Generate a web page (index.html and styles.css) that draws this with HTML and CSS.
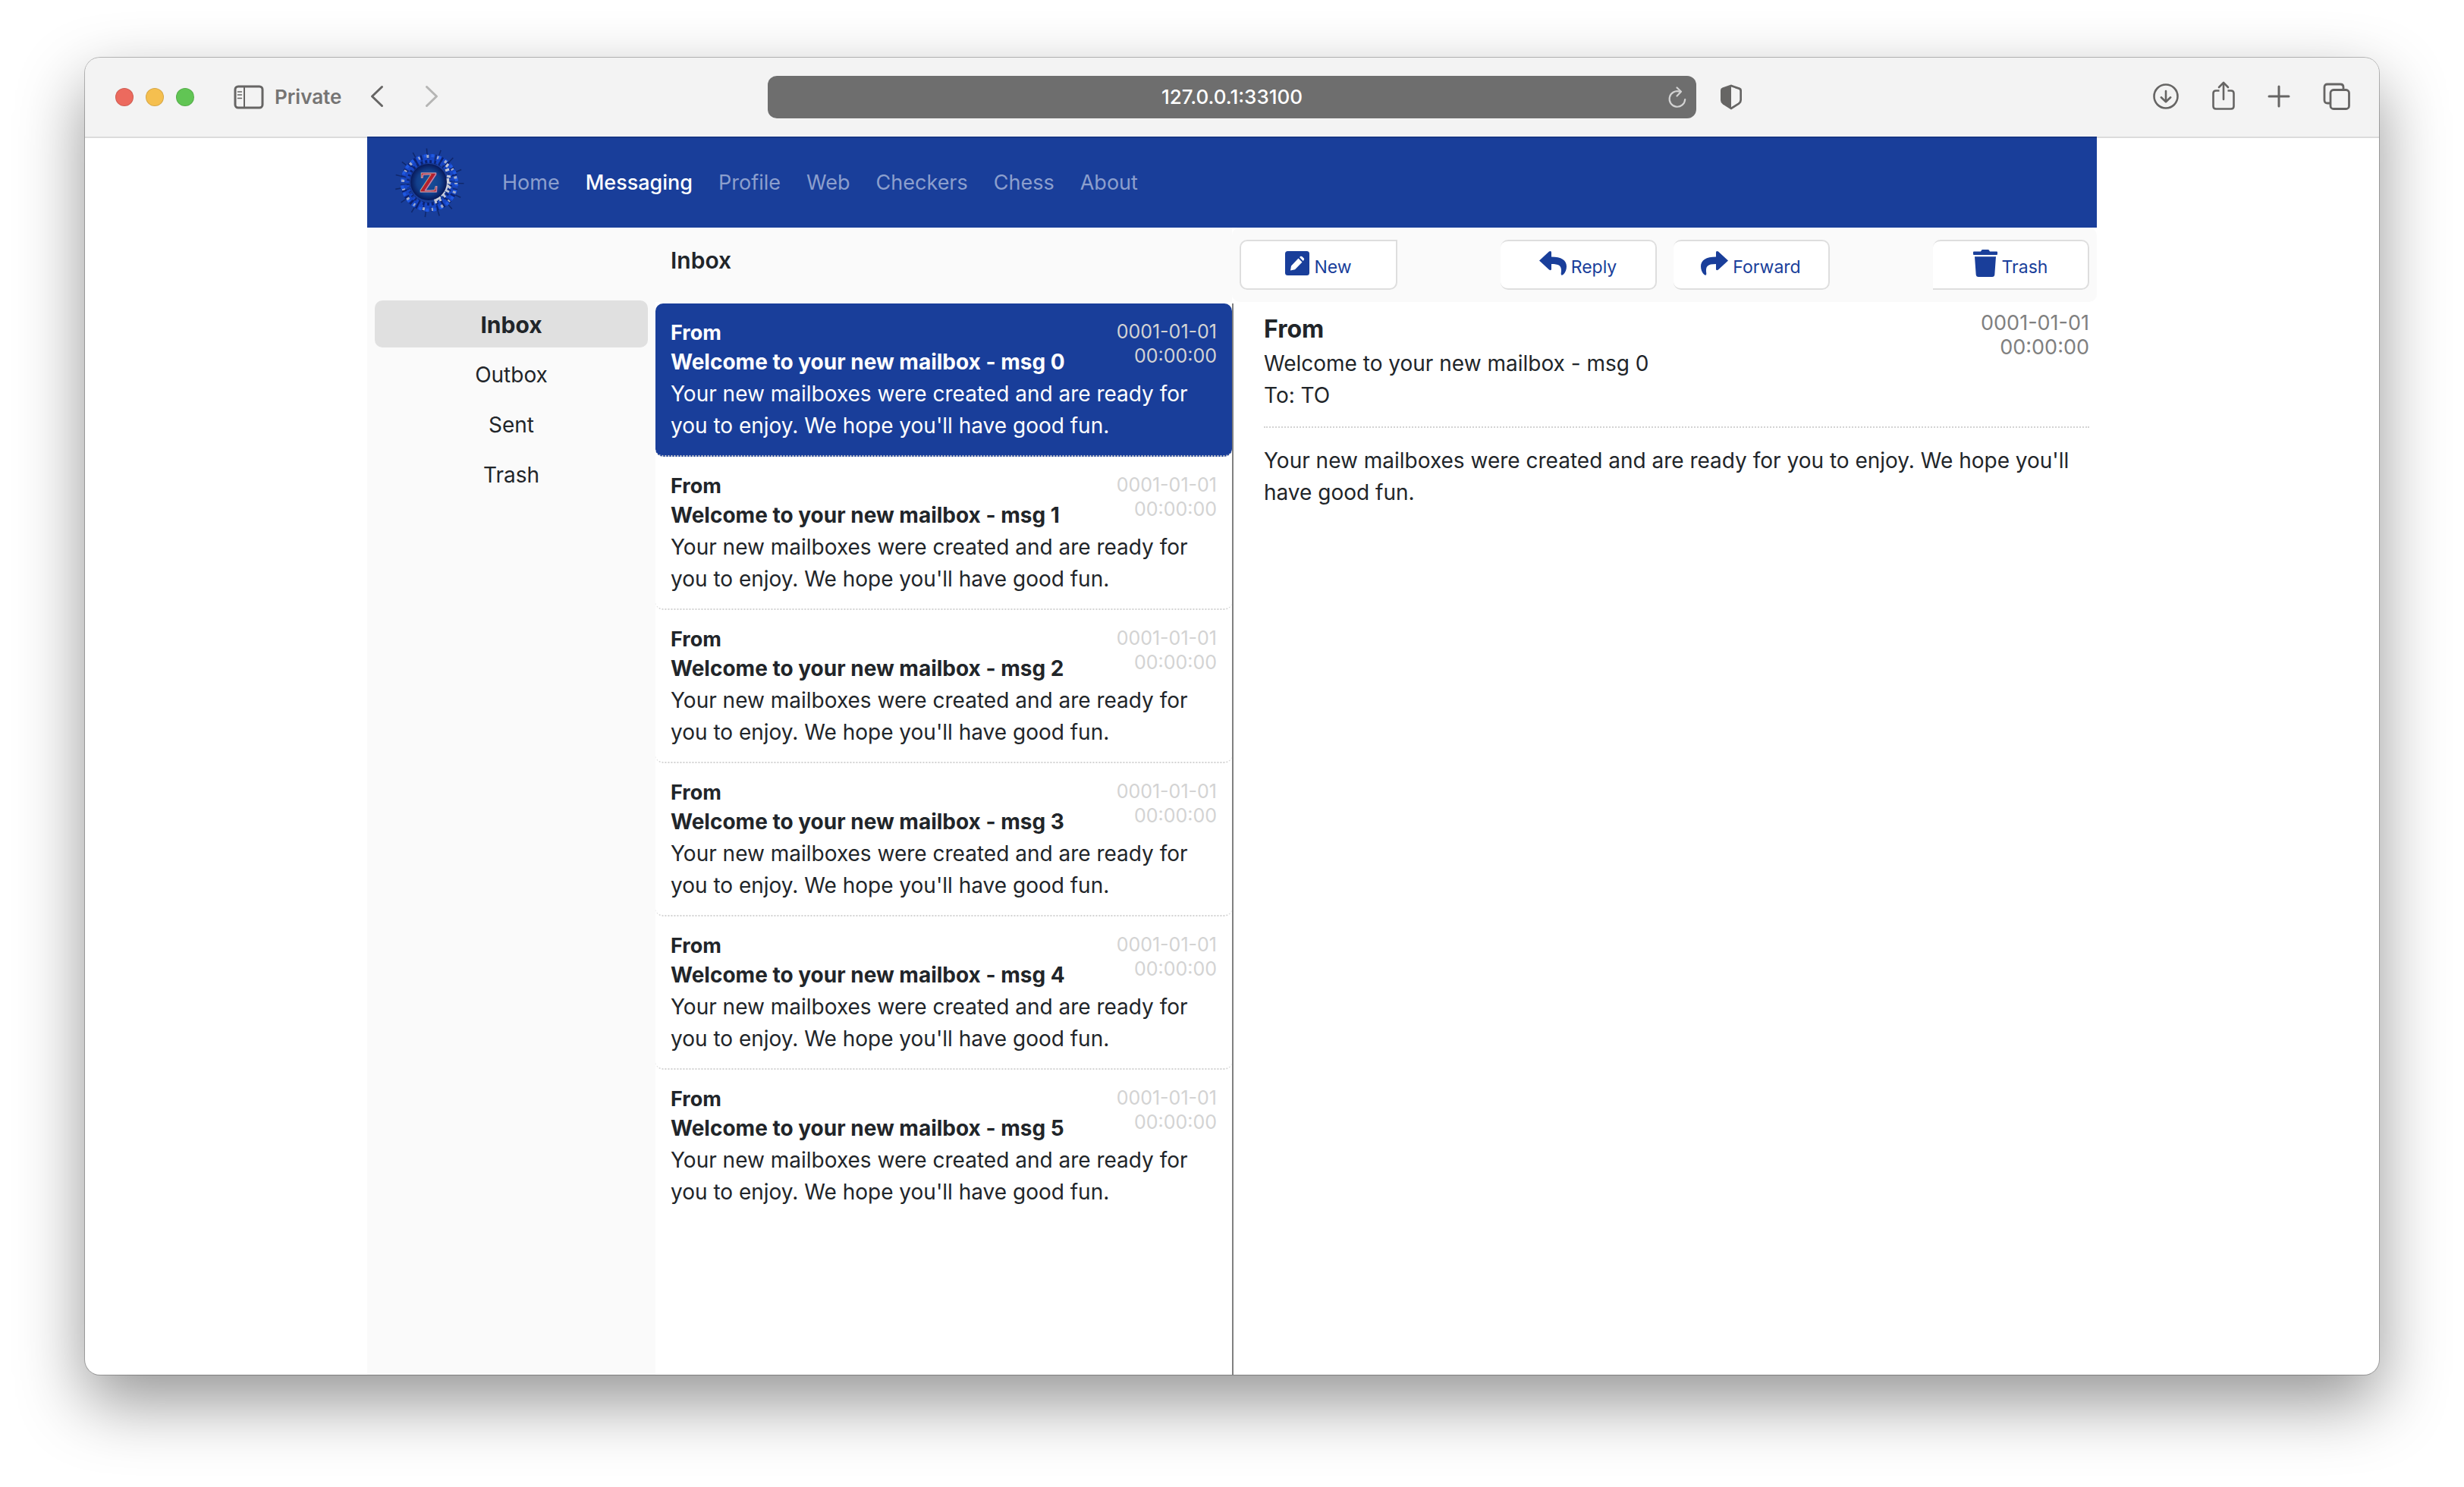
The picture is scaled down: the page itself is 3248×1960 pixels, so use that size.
FILE: index.html
```html
<!DOCTYPE html>
<html lang="en">
<head>
<meta charset="utf-8">
<meta name="viewport" content="width=device-width, initial-scale=1">
<title>Messaging</title>
<link rel="stylesheet" href="styles.css">
</head>
<body>
<div class="window">
  <header class="chrome">
    <div class="chrome-left">
      <div class="lights"><span class="light red"></span><span class="light yellow"></span><span class="light green"></span></div>
      <button class="icon-btn sidebar-btn" aria-label="Show sidebar">
        <svg width="40" height="32" viewBox="0 0 40 32" fill="none" stroke="currentColor" stroke-width="3"><rect x="2" y="2" width="36" height="28" rx="4"/><path d="M14 2v28" stroke-width="2"/><path d="M5.500 9h5M5.500 13h5M5.500 17.500h5" stroke-width="1.500" stroke-linecap="round"/></svg>
      </button>
      <span class="private">Private</span>
      <button class="icon-btn back-btn" aria-label="Back">
        <svg width="18" height="30" viewBox="0 0 18 30" fill="none" stroke="currentColor" stroke-width="3" stroke-linecap="round" stroke-linejoin="round"><path d="M15.500 1.500L2.500 14l13 12.500"/></svg>
      </button>
      <button class="icon-btn forward-btn" aria-label="Forward">
        <svg width="18" height="30" viewBox="0 0 18 30" fill="none" stroke="currentColor" stroke-width="3" stroke-linecap="round" stroke-linejoin="round"><path d="M2.500 1.500l13 12.500l-13 12.500"/></svg>
      </button>
    </div>
    <div class="address">
      <input class="address-input" type="text" value="127.0.0.1:33100" aria-label="Address">
      <button class="icon-btn reload-btn" aria-label="Reload">
        <svg width="26" height="30" viewBox="0 0 26 30" fill="none" stroke="currentColor" stroke-width="2.200" stroke-linecap="round"><path d="M23.200 18A10.300 10.300 0 1 1 16 7.600"/><path d="M12.500 2.500l5.500 5.300l-5.500 5.700" stroke-linejoin="round"/></svg>
      </button>
    </div>
    <div class="chrome-right">
      <button class="icon-btn" aria-label="Privacy report">
        <svg width="28" height="34" viewBox="0 0 28 34"><path d="M14 0.500L25.500 4.600Q28 5.600 28 8V21Q28 24.500 25 26.600L14 33.500L3 26.600Q0 24.500 0 21V8Q0 5.600 2.500 4.600Z" fill="currentColor"/><path d="M14 3.500L24 7Q25.300 7.500 25.300 9V20.500Q25.300 23 23.200 24.400L14 30.300Z" fill="#f3f3f3"/></svg>
      </button>
      <div class="chrome-actions">
        <button class="icon-btn" aria-label="Downloads">
          <svg width="34" height="36" viewBox="0 0 34 36" fill="none" stroke="currentColor" stroke-width="2.600" stroke-linecap="round" stroke-linejoin="round"><circle cx="17" cy="17" r="15.500"/><path d="M17 10v14M10.800 18.300L17 24.200l6.200-5.900"/></svg>
        </button>
        <button class="icon-btn" aria-label="Share">
          <svg width="30" height="42" viewBox="0 0 30 42" fill="none" stroke="currentColor" stroke-width="2.600" stroke-linecap="round" stroke-linejoin="round"><path d="M9.500 12.500H5q-3.500 0-3.500 3.500v17q0 3.500 3.500 3.500h20q3.500 0 3.500-3.500V16q0-3.500-3.500-3.500h-4.500" stroke-linecap="butt"/><path d="M15 24V2M9 8l6-6.200L21 8"/></svg>
        </button>
        <button class="icon-btn" aria-label="New tab">
          <svg width="28" height="30" viewBox="0 0 28 30" fill="none" stroke="currentColor" stroke-width="3" stroke-linecap="round"><path d="M14 1v26M1 14h26"/></svg>
        </button>
        <button class="icon-btn" aria-label="Tab overview">
          <svg width="36" height="38" viewBox="0 0 36 38" fill="none" stroke="currentColor" stroke-width="2.800"><path d="M9 27H6q-4 0-4-4V6q0-4 4-4h17q4 0 4 4v3.500"/><rect x="10" y="9.500" width="24.500" height="25" rx="4"/></svg>
        </button>
      </div>
    </div>
  </header>

  <div class="app">
    <nav class="navbar">
      <a class="logo" href="#" aria-label="Z home">
        <svg width="96" height="96" viewBox="0 0 96 96">
          <defs><radialGradient id="core"><stop offset="0" stop-color="#17529a"/><stop offset=".65" stop-color="#123f8c"/><stop offset="1" stop-color="#08195a"/></radialGradient></defs>
          <g fill="none">
            <circle cx="48" cy="48" r="41" stroke="#10286c" stroke-width="9" stroke-dasharray="1.500 15.670"/>
            <circle cx="48" cy="48" r="32" stroke="#0b2272" stroke-width="12" stroke-dasharray="5 2.180"/>
            <circle cx="48" cy="48" r="34" stroke="#1746c4" stroke-width="8" stroke-dasharray="6 2.900"/>
            <circle cx="48" cy="48" r="36" stroke="#1f58e0" stroke-width="4" stroke-dasharray="4 5.550"/>
            <circle cx="48" cy="48" r="29" stroke="#1746c4" stroke-width="5" stroke-dasharray="3 3.070"/>
            <circle cx="48" cy="48" r="35" stroke="#a3adcb" stroke-width="4" stroke-dasharray="2 9 3 11"/>
            <path d="M69 32l5-2M71 39l5 1M69 45l7 4M70 50l6 5M66 56l8 4M64 60l5 7M60 65l3 7M55 68l2 7M70 27l3-4" stroke="#c0c5d6" stroke-width="3"/>
            <path d="M72 42Q74 57 56 71" stroke="#cdd1de" stroke-width="4" stroke-dasharray="7 2"/>
          </g>
          <circle cx="47" cy="47" r="24" fill="url(#core)"/>
          <text class="logo-z" x="47" y="60" text-anchor="middle">Z</text>
        </svg>
      </a>
      <div class="nav-links">
        <a href="#">Home</a>
        <a href="#" class="current" aria-current="page">Messaging</a>
        <a href="#">Profile</a>
        <a href="#">Web</a>
        <a href="#">Checkers</a>
        <a href="#">Chess</a>
        <a href="#">About</a>
      </div>
    </nav>

    <main class="mail">
      <nav class="folders" aria-label="Mailboxes">
        <a class="folder active" href="#">Inbox</a>
        <a class="folder" href="#">Outbox</a>
        <a class="folder" href="#">Sent</a>
        <a class="folder" href="#">Trash</a>
      </nav>

      <section class="listing">
        <h1 class="listing-title">Inbox</h1>
        <ul class="messages">
          <li><a class="message selected" href="#"><span class="from">From</span><time class="date">0001-01-01<br>00:00:00</time><span class="subject">Welcome to your new mailbox - msg 0</span><span class="preview">Your new mailboxes were created and are ready for you to enjoy. We hope you'll have good fun.</span></a></li>
          <li><a class="message" href="#"><span class="from">From</span><time class="date">0001-01-01<br>00:00:00</time><span class="subject">Welcome to your new mailbox - msg 1</span><span class="preview">Your new mailboxes were created and are ready for you to enjoy. We hope you'll have good fun.</span></a></li>
          <li><a class="message" href="#"><span class="from">From</span><time class="date">0001-01-01<br>00:00:00</time><span class="subject">Welcome to your new mailbox - msg 2</span><span class="preview">Your new mailboxes were created and are ready for you to enjoy. We hope you'll have good fun.</span></a></li>
          <li><a class="message" href="#"><span class="from">From</span><time class="date">0001-01-01<br>00:00:00</time><span class="subject">Welcome to your new mailbox - msg 3</span><span class="preview">Your new mailboxes were created and are ready for you to enjoy. We hope you'll have good fun.</span></a></li>
          <li><a class="message" href="#"><span class="from">From</span><time class="date">0001-01-01<br>00:00:00</time><span class="subject">Welcome to your new mailbox - msg 4</span><span class="preview">Your new mailboxes were created and are ready for you to enjoy. We hope you'll have good fun.</span></a></li>
          <li><a class="message" href="#"><span class="from">From</span><time class="date">0001-01-01<br>00:00:00</time><span class="subject">Welcome to your new mailbox - msg 5</span><span class="preview">Your new mailboxes were created and are ready for you to enjoy. We hope you'll have good fun.</span></a></li>
        </ul>
      </section>

      <section class="reader">
        <div class="actions">
          <button class="action first">
            <svg width="32" height="32" viewBox="0 0 32 32"><rect width="32" height="32" rx="3.500" fill="currentColor"/><path d="M7 25.500L8 19.500L17.500 9.500L22.500 14.500L13 24.300ZM19 8L20.500 6.800Q21.500 6.300 22.500 7.300L24.800 9.600Q25.600 10.700 24.700 11.700L23.700 13Z" fill="#fff"/></svg>
            <span>New</span>
          </button>
          <div class="action-group">
            <button class="action joined">
              <svg width="36" height="32" viewBox="0 0 36 32"><path d="M0 12.500L13 .6Q16 -1 16 2V7.500C29 7.500 36 12 36 20Q36 27 31.500 31Q28.500 33 28.700 29.500C30 20 27.500 17 16 17V23.500Q16 26.500 13 24.500Z" fill="currentColor"/></svg>
              <span>Reply</span>
            </button>
            <button class="action joined">
              <svg width="36" height="32" viewBox="0 0 36 32"><path d="M36 12.500L23 .6Q20 -1 20 2V7.500C7 7.500 0 12 0 20Q0 27 4.500 31Q7.500 33 7.300 29.500C6 20 8.500 17 20 17V23.500Q20 26.500 23 24.500Z" fill="currentColor"/></svg>
              <span>Forward</span>
            </button>
          </div>
          <button class="action joined last">
            <svg width="32" height="36" viewBox="0 0 32 36"><path d="M1 2.500H10L11.200 .6Q11.600 0 12.500 0H19.500Q20.400 0 20.800 .6L22 2.500H31Q32 2.500 32 3.500V6Q32 7 31 7H1Q0 7 0 6V3.500Q0 2.500 1 2.500ZM2 9.200H30L28.300 33Q28 36 25 36H7Q4 36 3.700 33Z" fill="currentColor"/></svg>
            <span>Trash</span>
          </button>
        </div>
        <article class="letter">
          <header class="letter-head">
            <h2 class="letter-from">From</h2>
            <time class="letter-date">0001-01-01<br>00:00:00</time>
            <p class="letter-line">Welcome to your new mailbox - msg 0</p>
            <p class="letter-line">To: TO</p>
          </header>
          <p class="letter-body">Your new mailboxes were created and are ready for you to enjoy. We hope you'll have good fun.</p>
        </article>
      </section>
    </main>
  </div>
</div>
</body>
</html>
```
FILE: styles.css
```css
* { box-sizing: border-box; }

body {
  margin: 0;
  min-height: 100vh;
  padding: 76px 112px 148px;
  display: flex;
  flex-direction: column;
  background: #fff;
  color: #212529;
  font-family: Inter, "Liberation Sans", sans-serif;
  font-size: 28px;
  line-height: 42px;
}

a { color: inherit; text-decoration: none; }
h1, h2, p, ul { margin: 0; padding: 0; }
ul { list-style: none; }
button { font: inherit; cursor: pointer; }
svg { display: block; flex: none; overflow: visible; }

.window {
  flex: 1;
  display: flex;
  flex-direction: column;
  overflow: hidden;
  background: #fff;
  border-radius: 20px;
  box-shadow: 0 0 0 1px rgba(0, 0, 0, .25), 0 36px 88px rgba(0, 0, 0, .42);
}

/* Browser toolbar */
.chrome {
  height: 104px;
  display: grid;
  grid-template-columns: 75fr 102fr 75fr;
  align-items: center;
  background: #f3f3f3;
  color: #666564;
  box-shadow: 0 1px 0 1px rgba(0, 0, 0, .14);
  z-index: 1;
}
.chrome-left { display: flex; align-items: center; padding-left: 40px; }
.lights { display: flex; gap: 16px; margin-right: 52px; }
.light { width: 24px; height: 24px; border-radius: 50%; border: 1px solid rgba(0, 0, 0, .12); }
.red { background: #ec6a5e; }
.yellow { background: #f5bf4f; }
.green { background: #61c554; }
.icon-btn { display: flex; padding: 0; border: 0; background: none; color: #666564; }
.private { margin: 0 38px 0 14px; font-size: 26px; font-weight: 600; color: #757473; }
.forward-btn { margin-left: 54px; color: #b5b5b4; }
.address {
  height: 56px;
  display: flex;
  align-items: center;
  padding: 0 12px 0 38px;
  border-radius: 12px;
  background: #6e6e6e;
}
.address-input {
  flex: 1;
  min-width: 0;
  border: 0;
  padding: 0;
  background: none;
  color: #fff;
  text-align: center;
  font: 500 26px/40px Inter, "Liberation Sans", sans-serif;
}
.reload-btn { color: #d2d2d2; }
.chrome-right { display: flex; align-items: center; justify-content: space-between; padding: 0 38px 0 32px; }
.chrome-actions { display: flex; align-items: center; gap: 44px; }

/* Site */
.app {
  flex: 1;
  width: 100%;
  max-width: 2280px;
  margin: 0 auto;
  display: flex;
  flex-direction: column;
}
.navbar {
  height: 120px;
  display: flex;
  align-items: center;
  gap: 48px;
  padding: 2px 34px 0;
  background: #193e9a;
}
.logo-z {
  font: bold 38px "Liberation Serif", serif;
  fill: #b3202c;
  stroke: #c9a0b0;
  stroke-width: 1px;
}
.nav-links { display: flex; gap: 34px; color: #8c9fcd; font-size: 27px; }
.current { color: #fff; font-weight: 500; }

.mail { flex: 1; display: grid; grid-template-columns: 1fr 2fr 3fr; }

.folders {
  display: flex;
  flex-direction: column;
  gap: 4px;
  padding: 96px 10px 0;
  background: #fafafa;
  text-align: center;
}
.folder { padding-top: 2px; line-height: 60px; border-radius: 10px; }
.folder.active { background: #e0e0e0; font-size: 30px; font-weight: 700; }

.listing-title {
  height: 98px;
  padding: 22px 20px 0;
  background: #fafafa;
  font-size: 30px;
  font-weight: 600;
  line-height: 42px;
}
.messages { margin-top: 2px; }
.message {
  display: grid;
  grid-template-columns: 1fr auto;
  grid-template-rows: 38px 38px auto;
  padding: 20px 20px 18px;
  border-bottom: 2px dotted #d3d3d3;
  border-radius: 10px;
}
li:last-child .message { border-bottom-color: transparent; }
.message.selected { background: #193e9a; color: #fff; }
.from, .subject { grid-column: 1; font-weight: 700; line-height: 38px; }
.from { font-size: 27px; }
.date { grid-column: 2; grid-row: 1 / 3; padding-top: 1px; color: #d3d3d3; font-size: 25px; line-height: 32px; text-align: right; }
.preview { grid-column: 1 / 3; padding-top: 2px; }

.reader { display: flex; flex-direction: column; }
.actions {
  height: 98px;
  display: flex;
  align-items: center;
  justify-content: space-between;
  padding: 0 10px;
  border-radius: 10px;
  background: #fafafa;
}
.action-group { display: flex; gap: 22px; }
.action {
  width: 206px;
  height: 66px;
  display: flex;
  align-items: center;
  justify-content: center;
  gap: 6px;
  padding: 0;
  border: 2px solid #dedede;
  border-radius: 10px;
  background: #fff;
  color: #193e9a;
  font-size: 23px;
  line-height: 28px;
}
.action svg { margin-bottom: 4px; }
.action span { padding-top: 6px; }
.first { width: 208px; border-top-right-radius: 0; }
.joined { border-left: 0; }
.last { border-bottom-left-radius: 0; }

.letter {
  flex: 1;
  margin-top: 2px;
  padding: 12px 10px 0 40px;
  border-left: 2px solid #808080;
}
.letter-head {
  display: grid;
  grid-template-columns: 1fr auto;
  grid-template-rows: 46px 42px 42px;
  padding-bottom: 20px;
  border-bottom: 2px dotted #d3d3d3;
}
.letter-from { font-size: 32px; font-weight: 700; line-height: 44px; }
.letter-date {
  grid-column: 2;
  grid-row: 1 / 3;
  margin-top: -2px;
  color: #808080;
  font-size: 27px;
  line-height: 32px;
  text-align: right;
}
.letter-line { grid-column: 1; }
.letter-body { padding-top: 22px; }
```
